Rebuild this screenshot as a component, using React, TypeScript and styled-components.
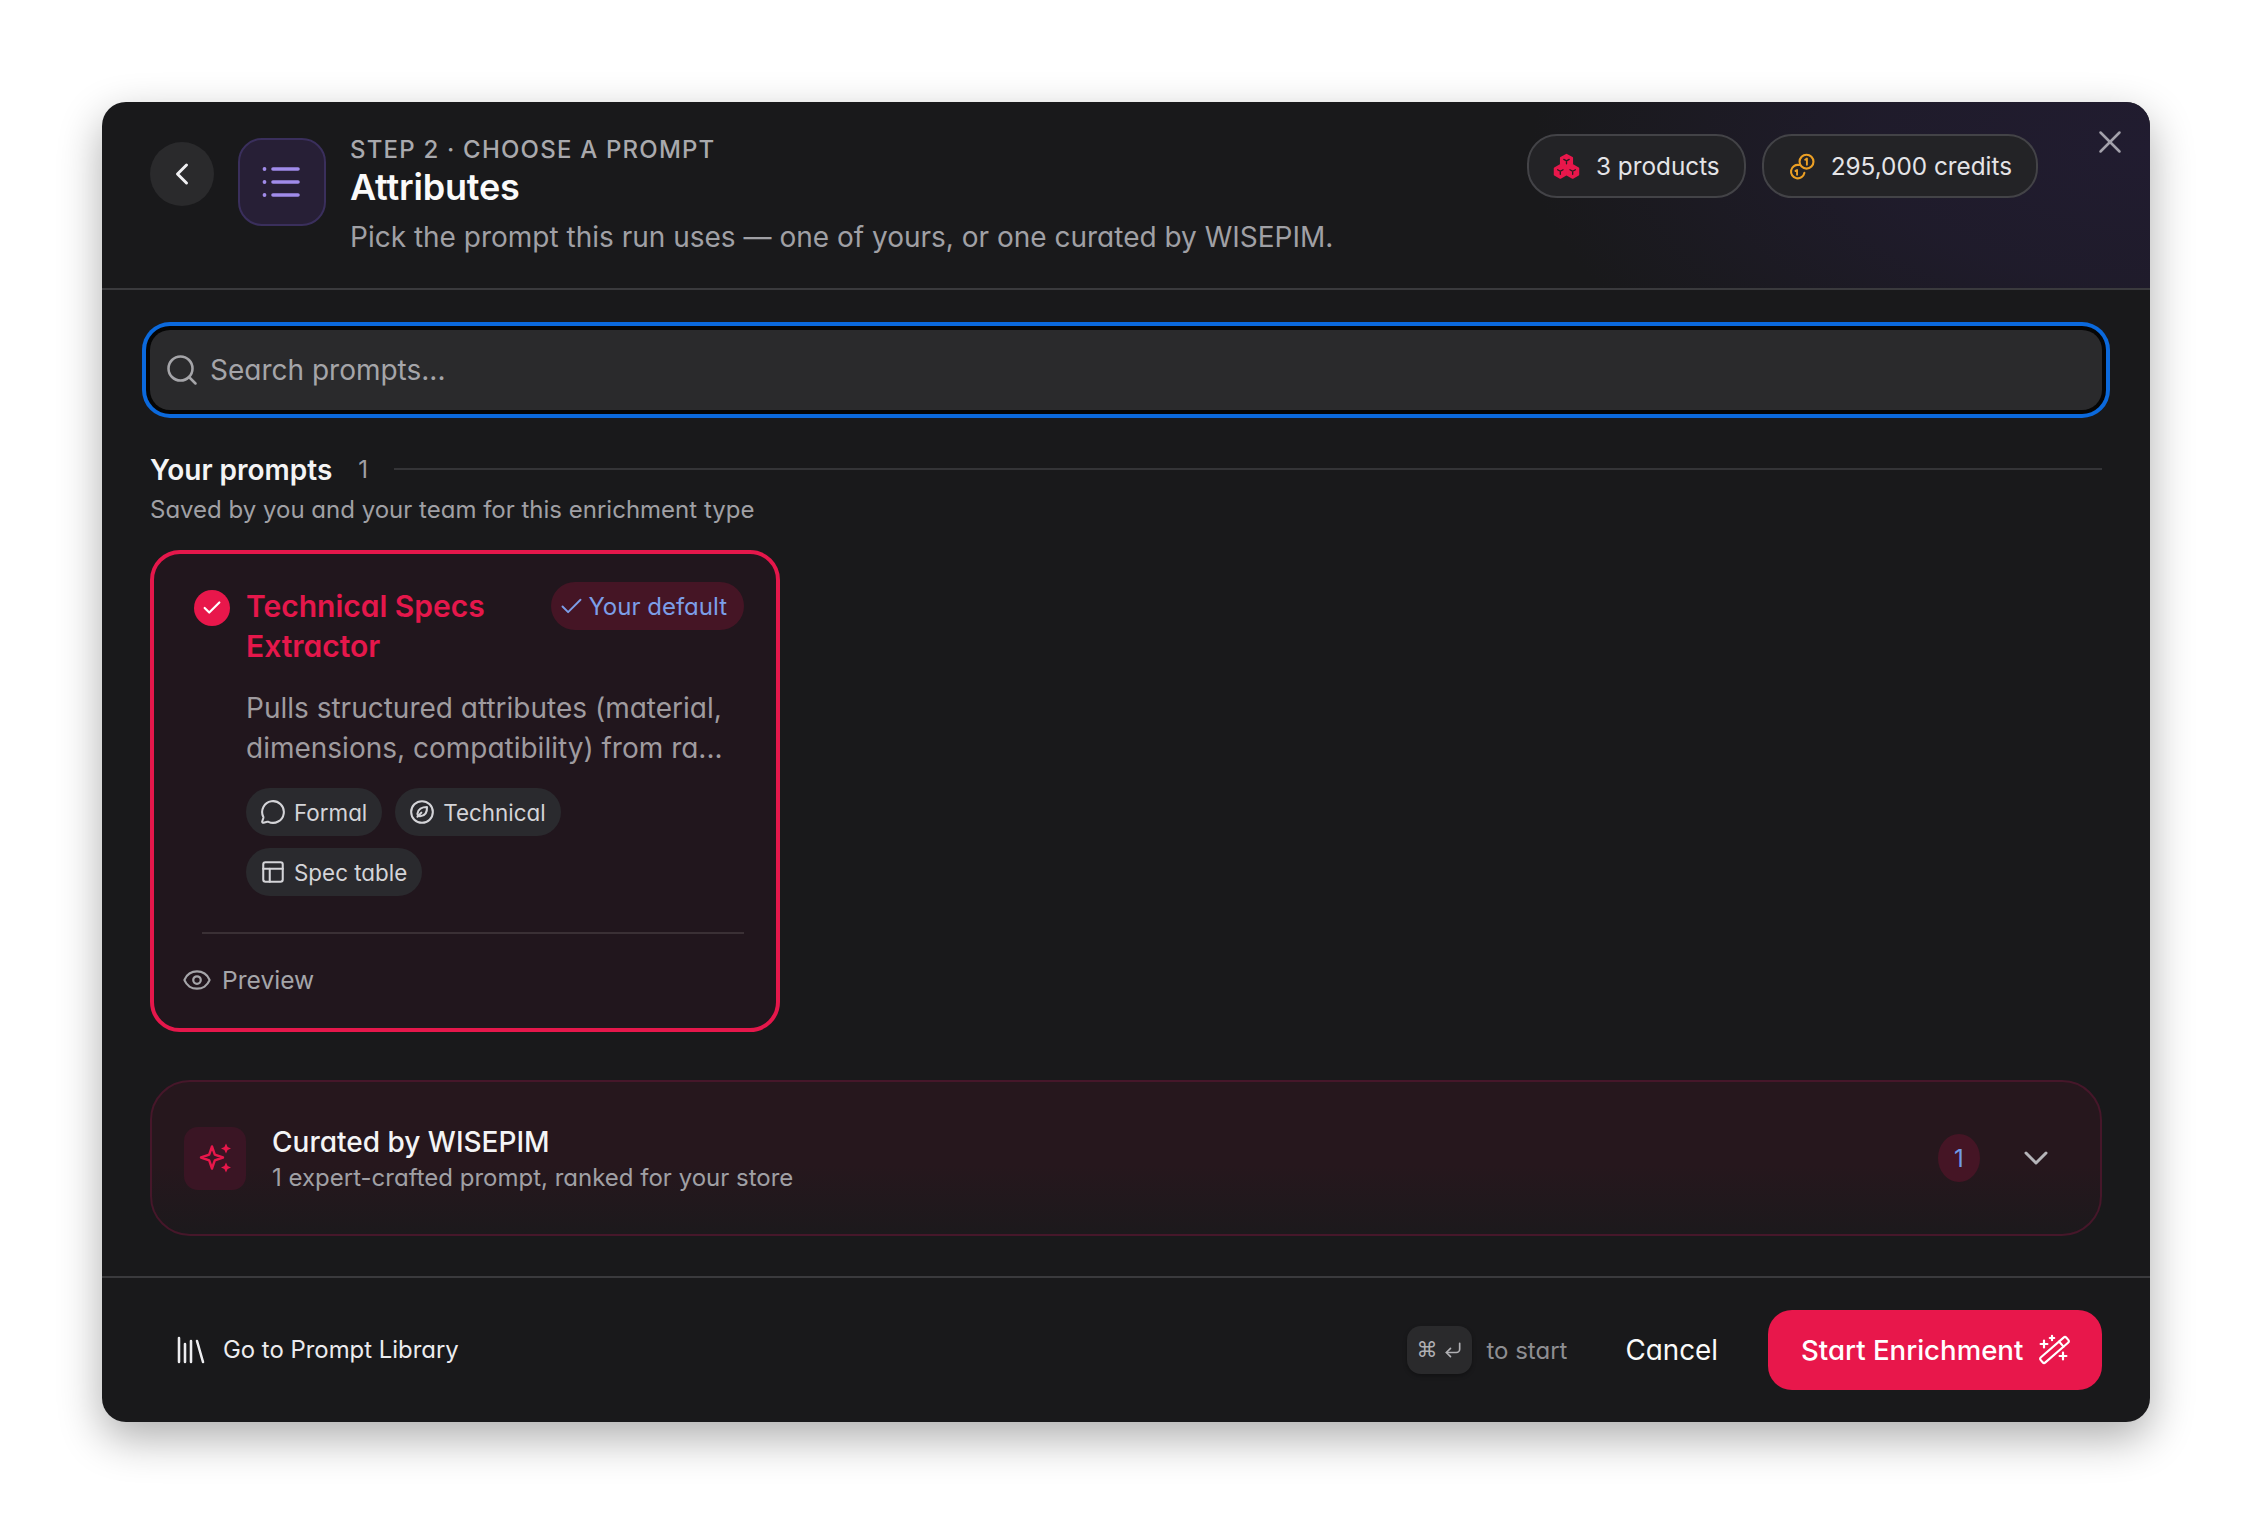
import React from "react";
import styled, { createGlobalStyle } from "styled-components";
import { ChevronDown, ChevronLeft, Check, Eye, Library, MessageCircle, PanelsTopLeft, Search, X, CornerDownLeft } from "lucide-react";

const Global = createGlobalStyle`
  html, body { margin: 0; padding: 0; background: #fff; }
  * { box-sizing: border-box; }
  body { font-family: Inter, "Liberation Sans", sans-serif; font-feature-settings: "cv11" 1; -webkit-font-smoothing: antialiased; }
`;
const Page = styled.div`
  width: 2252px; height: 1524px; padding: 102px; overflow: hidden;
`;
const Modal = styled.div`
  position: relative; width: 2048px; height: 1320px; border-radius: 24px;
  background: #19191b; box-shadow: 0 16px 44px rgba(0,0,0,.32); overflow: hidden;
  display: flex; flex-direction: column;
`;
const Header = styled.header`
  display: flex; align-items: flex-start; height: 188px; padding: 32px 112px 0 48px;
  border-bottom: 2px solid #3a3a3d;
  background: radial-gradient(ellipse 620px 300px at 100% 25%, #211c30 0%, rgba(33,28,48,.75) 45%, rgba(25,25,27,0) 100%);
`;
const BackButton = styled.div`
  width: 64px; height: 64px; margin-top: 8px; border-radius: 50%; background: #2a2a2c; color: #f0f0f2;
  display: flex; align-items: center; justify-content: center;
`;
const ListBadge = styled.div`
  width: 88px; height: 88px; margin: 4px 24px 0; border-radius: 24px; background: #271f36; border: 2px solid #3a2f5c;
  display: flex; align-items: center; justify-content: center;
`;
const Titles = styled.div`
  display: flex; flex-direction: column;
`;
const Eyebrow = styled.div`
  font-size: 24px; line-height: 32px; font-weight: 500; letter-spacing: 1.2px; color: #a9a9ad;
`;
const Title = styled.div`
  margin-top: -1px; font-size: 36px; line-height: 44px; font-weight: 600; color: #fafafa; letter-spacing: -0.2px;
`;
const Subtitle = styled.div`
  margin-top: 8px; font-size: 28px; line-height: 40px; color: #a0a0a5; white-space: nowrap;
`;
const Pills = styled.div`
  margin-left: auto; display: flex; gap: 16px;
`;
const Pill = styled.div`
  height: 64px; display: flex; align-items: center; gap: 16px; padding: 0 24px; border-radius: 30px;
  background: #232326; border: 2px solid #434347; font-size: 24.3px; color: #e4e4e7; white-space: nowrap;
`;
const CloseIcon = styled(X)`
  position: absolute; top: 21px; right: 21px; color: #a3a1ab;
`;
const Body = styled.main`
  flex: 1; padding: 40px 48px 0;
`;
const SearchBox = styled.div`
  height: 80px; border-radius: 20px; background: #2a2a2c; display: flex; align-items: center; gap: 10px; padding: 0 14px;
  box-shadow: 0 0 0 4px #050505, 0 0 0 8px #0b69dc; color: #a5a5a9; font-size: 28px; line-height: 34px;
`;
const SectionHead = styled.div`
  margin-top: 39px; display: flex; align-items: center; height: 40px;
`;
const SectionTitle = styled.div`
  margin-top: 2px; font-size: 28px; font-weight: 600; color: #f4f4f5; white-space: nowrap;
`;
const SectionCount = styled.div`
  margin: 1px 0 0 26px; font-size: 24px; color: #a0a0a5;
`;
const SectionRule = styled.div`
  margin-left: 26px; flex: 1; height: 2px; background: #343437;
`;
const SectionSub = styled.div`
  margin-top: 5px; font-size: 24px; line-height: 32px; color: #a0a0a5;
`;
const Card = styled.section`
  margin-top: 24px; width: 630px; height: 482px; border: 4px solid #e5174b; border-radius: 30px; background: #21161d;
`;
const CardTop = styled.div`
  padding: 32px 32px 0 40px; display: flex; align-items: flex-start;
`;
const Tick = styled.div`
  flex: none; width: 36px; height: 36px; margin-top: 4px; border-radius: 50%; background: #e8174b; color: #fff;
  display: flex; align-items: center; justify-content: center;
`;
const CardTitle = styled.div`
  margin-left: 16px; width: 280px; font-size: 30px; line-height: 40px; font-weight: 600; color: #e5174b;
`;
const DefaultBadge = styled.div`
  margin: -4px 0 0 auto; height: 48px; display: flex; align-items: center; gap: 3px; padding: 0 17px 0 7px; border-radius: 24px;
  background: #451525; color: #7c9ee8; font-size: 24px; white-space: nowrap;
`;
const Description = styled.div`
  margin: 22px 28px 0 92px; font-size: 28px; line-height: 40px; color: #9f9b9f; white-space: nowrap;
`;
const Chips = styled.div`
  margin: 20px 0 0 92px; width: 420px; display: flex; flex-wrap: wrap; gap: 12px 13px;
`;
const Chip = styled.div`
  height: 48px; display: flex; align-items: center; gap: 8px; padding: 0 15px 0 14px; border-radius: 24px;
  background: #2a2a2e; color: #d4d4d8; font-size: 22.4px;
`;
const CardRule = styled.div`
  margin: 36px 32px 0 48px; height: 2px; background: #3a3035;
`;
const PreviewRow = styled.div`
  height: 94px; padding: 0 0 2px 28px; display: flex; align-items: center; gap: 10px; color: #a5a5a9; font-size: 24.6px;
`;
const Curated = styled.section`
  margin-top: 48px; height: 156px; border: 2px solid #46172a; border-radius: 40px; padding: 0 44px 0 32px;
  display: flex; align-items: center; background: linear-gradient(180deg, #26171d 0%, #26171d 55%, #1c191c 100%);
`;
const SparkBox = styled.div`
  width: 62px; height: 63px; border-radius: 14px; background: #3a1524;
  display: flex; align-items: center; justify-content: center;
`;
const CuratedText = styled.div`
  margin-left: 26px;
`;
const CuratedTitle = styled.div`
  padding-top: 1px; font-size: 28px; line-height: 39px; font-weight: 500; color: #f4f4f5;
`;
const CuratedSub = styled.div`
  font-size: 24px; line-height: 32px; color: #a0a0a5;
`;
const CountBadge = styled.div`
  margin-left: auto; width: 42px; height: 48px; border-radius: 50%; background: #451525; color: #6f9be8; font-size: 24px;
  display: flex; align-items: center; justify-content: center;
`;
const Expand = styled(ChevronDown)`
  margin-left: 36px; color: #b5b5b9;
`;
const Footer = styled.footer`
  height: 146px; border-top: 2px solid #3a3a3d; padding: 0 48px 0 71px; display: flex; align-items: center;
`;
const LibraryLink = styled.div`
  display: flex; align-items: center; gap: 14px; color: #ececef; font-size: 23.9px; line-height: 30px; padding-bottom: 1px; white-space: nowrap;
`;
const Kbd = styled.div`
  margin-left: auto; width: 65px; height: 48px; border-radius: 14px; background: #2a2a2c; color: #b0b0b4; font-size: 21px;
  display: flex; align-items: center; justify-content: center; gap: 6px; box-shadow: 0 2px 4px rgba(0,0,0,.3);
  font-family: "DejaVu Sans", sans-serif;
`;
const KbdNote = styled.div`
  margin-left: 14px; font-size: 24px; color: #8e8e92; white-space: nowrap;
`;
const CancelLabel = styled.div`
  margin-left: 58px; font-size: 27.8px; color: #fafafa;
`;
const StartButton = styled.div`
  margin-left: 50px; width: 334px; height: 80px; border-radius: 24px; background: #e8174b; color: #fff; font-size: 27.6px; font-weight: 500;
  display: flex; align-items: center; padding-left: 33px; gap: 16px; white-space: nowrap;
`;

const ListGlyph = () => (
  <svg width="44" height="44" viewBox="0 0 44 44" fill="none" stroke="#a08bea" strokeLinecap="round">
    <path d="M15 9h25M15 22h25M15 35h25" strokeWidth="3.6" transform="translate(-2 0)" />
    <path d="M4.5 9h.01M4.5 22h.01M4.5 35h.01" strokeWidth="3.8" />
  </svg>
);
const Cube = ({ x, y }: { x: number; y: number }) => (
  <g transform={`translate(${x} ${y})`}>
    <path d="M0-6.6 5.8-3.3v6.6L0 6.6-5.8 3.3v-6.6Z" fill="#e8174b" stroke="#e8174b" strokeWidth="2" strokeLinejoin="round" />
    <path d="M-2.8-1.8 0-.2l2.8-1.6M0-.2v3" stroke="#2a1a20" strokeWidth="1.4" fill="none" strokeLinecap="round" />
  </g>
);
const ProductsGlyph = () => (
  <svg width="27" height="27" viewBox="0 0 28 28">
    <Cube x={14} y={8.4} />
    <Cube x={7.6} y={19.2} />
    <Cube x={20.4} y={19.2} />
  </svg>
);
const CoinsGlyph = () => (
  <svg width="27" height="27" viewBox="0 0 28 28" fill="none" stroke="#eb9f24" strokeWidth="2.2" strokeLinecap="round" strokeLinejoin="round">
    <circle cx="19.2" cy="9" r="7.2" />
    <path d="M17.8 7 19.6 5.8v6.4" strokeWidth="2" />
    <path d="M11.4 12.4A7 7 0 1 0 17 20.6" />
    <path d="M7.8 18.6 9.4 17.6v5" strokeWidth="2" />
  </svg>
);
const LeafCompass = () => (
  <svg width="26" height="26" viewBox="0 0 24 24" fill="none" stroke="currentColor" strokeWidth="1.9" strokeLinecap="round" strokeLinejoin="round">
    <circle cx="12" cy="12" r="10" />
    <path d="M16.6 7.4c.3 4.8-1.6 8.2-6.4 8.6-1.7-.2-2.4-1-2.4-2.6.5-3.8 4.2-6 8.8-6Z" />
    <path d="M7.8 16.4l3.6-3.8" />
  </svg>
);
const SparkGlyph = () => (
  <svg width="34" height="34" viewBox="0 0 34 34">
    <path d="M14 5.5 16.8 13.7 25 16.5 16.8 19.3 14 27.5 11.2 19.3 3 16.5 11.2 13.7Z" fill="none" stroke="#e8174b" strokeWidth="2.4" strokeLinejoin="round" />
    <path d="M28 2.5l1.6 3.4 3.4 1.6-3.4 1.6L28 12.5l-1.6-3.4-3.4-1.6 3.4-1.6Z" fill="#e8174b" />
    <path d="M28 21.5l1.6 3.4 3.4 1.6-3.4 1.6L28 31.5l-1.6-3.4-3.4-1.6 3.4-1.6Z" fill="#e8174b" />
  </svg>
);
const WandGlyph = () => (
  <svg width="32" height="32" viewBox="0 0 32 32" fill="none" stroke="#fff" strokeLinecap="round" strokeLinejoin="round">
    <g transform="translate(15.5 16) rotate(-41)">
      <rect x="-17" y="-3.4" width="34" height="6.8" rx="2" strokeWidth="2.1" />
      <path d="M9-3.4v6.8" strokeWidth="2.1" />
    </g>
    <path d="M5 6.6v6.8M1.6 10h6.8" strokeWidth="2.2" />
    <path d="M13 1.8v4.4M10.8 4h4.4" strokeWidth="2.2" />
    <path d="M24 18.6v6.8M20.6 22h6.8" strokeWidth="2.2" />
  </svg>
);

export default function App() {
  return (
    <Page>
      <Global />
      <Modal>
        <Header>
          <BackButton><ChevronLeft size={36} strokeWidth={2} /></BackButton>
          <ListBadge><ListGlyph /></ListBadge>
          <Titles>
            <Eyebrow>STEP 2 · CHOOSE A PROMPT</Eyebrow>
            <Title>Attributes</Title>
            <Subtitle>Pick the prompt this run uses — one of yours, or one curated by WISEPIM.</Subtitle>
          </Titles>
          <Pills>
            <Pill><ProductsGlyph />3 products</Pill>
            <Pill><CoinsGlyph />295,000 credits</Pill>
          </Pills>
        </Header>
        <CloseIcon size={38} strokeWidth={1.6} />
        <Body>
          <SearchBox><Search size={36} strokeWidth={1.7} />Search prompts...</SearchBox>
          <SectionHead>
            <SectionTitle>Your prompts</SectionTitle>
            <SectionCount>1</SectionCount>
            <SectionRule />
          </SectionHead>
          <SectionSub>Saved by you and your team for this enrichment type</SectionSub>
          <Card>
            <CardTop>
              <Tick><Check size={22} strokeWidth={2.4} /></Tick>
              <CardTitle>Technical Specs Extractor</CardTitle>
              <DefaultBadge><Check size={27} strokeWidth={1.7} />Your default</DefaultBadge>
            </CardTop>
            <Description>Pulls structured attributes (material,<br />dimensions, compatibility) from ra...</Description>
            <Chips>
              <Chip><MessageCircle size={26} strokeWidth={1.9} />Formal</Chip>
              <Chip><LeafCompass />Technical</Chip>
              <Chip><PanelsTopLeft size={26} strokeWidth={1.9} />Spec table</Chip>
            </Chips>
            <CardRule />
            <PreviewRow><Eye size={30} strokeWidth={1.8} />Preview</PreviewRow>
          </Card>
          <Curated>
            <SparkBox><SparkGlyph /></SparkBox>
            <CuratedText>
              <CuratedTitle>Curated by WISEPIM</CuratedTitle>
              <CuratedSub>1 expert-crafted prompt, ranked for your store</CuratedSub>
            </CuratedText>
            <CountBadge>1</CountBadge>
            <Expand size={40} strokeWidth={1.8} />
          </Curated>
        </Body>
        <Footer>
          <LibraryLink><Library size={36} strokeWidth={1.7} />Go to Prompt Library</LibraryLink>
          <Kbd>⌘<CornerDownLeft size={20} strokeWidth={2} /></Kbd>
          <KbdNote>to start</KbdNote>
          <CancelLabel>Cancel</CancelLabel>
          <StartButton>Start Enrichment<WandGlyph /></StartButton>
        </Footer>
      </Modal>
    </Page>
  );
}
